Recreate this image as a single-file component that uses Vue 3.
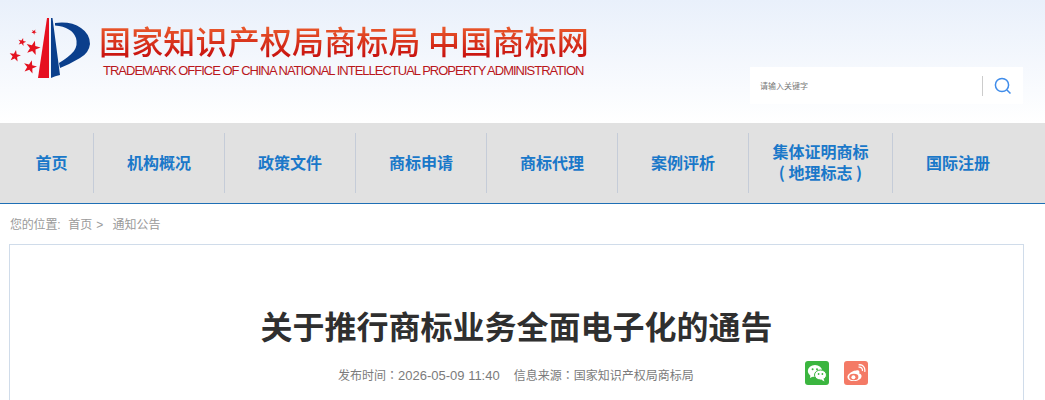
<template>
  <div class="page">
    <!-- 顶部 logo 和搜索 -->
    <header class="top">
      <div class="brand">
        <svg class="logo" width="92" height="70" viewBox="0 0 92 70">
          <path d="M29 61 L38 1 L40 1 L40 61 Z" fill="#e60f20" />
          <path d="M42 1 L43.5 1 L51 58 Q46 59 42 61 Z" fill="#0b3f8c" />
          <path d="M46 6 Q62 4 72 11 Q81 17 81 27 Q80 36 71 41 Q61 47 51 51 L50 46 Q60 40 65 34 Q69 28 67 21 Q63 10 46 8.5 Z" fill="#0b3f8c" />
          <polygon v-for="s in stars" :key="s" :points="s" fill="#e4111f" />
        </svg>
        <div class="brand-text">
          <div class="brand-cn">国家知识产权局商标局 中国商标网</div>
          <div class="brand-en">TRADEMARK OFFICE OF CHINA NATIONAL INTELLECTUAL PROPERTY ADMINISTRATION</div>
        </div>
      </div>
      <div class="search">
        <span class="search-tip">请输入关键字</span>
        <span class="search-line"></span>
        <svg width="18" height="18" viewBox="0 0 18 18" fill="none" stroke="#3f8cea" stroke-width="1.5">
          <circle cx="8" cy="8" r="6.6" />
          <line x1="13" y1="13" x2="16.5" y2="16.5" />
        </svg>
      </div>
    </header>

    <!-- 导航 -->
    <nav class="nav">
      <div
        v-for="item in navs"
        :key="item.name"
        class="nav-item"
        :class="item.cls"
      >
        <span>{{ item.name }}<template v-if="item.sub"><br />{{ item.sub }}</template></span>
      </div>
    </nav>

    <div class="crumb">
      <span class="crumb-label">您的位置:</span>
      <span>首页</span>
      <span class="gt">&gt;</span>
      <span>通知公告</span>
    </div>

    <!-- 正文 -->
    <section class="card">
      <h1 class="title">关于推行商标业务全面电子化的通告</h1>
      <div class="meta">
        <div class="meta-text">
          <span>发布时间：<span class="num">2026-05-09 11:40</span></span>
          <span>信息来源：国家知识产权局商标局</span>
        </div>
        <div class="share">
          <span class="share-btn wechat">
            <svg width="20" height="18" viewBox="0 0 20 18">
              <ellipse cx="8" cy="7" rx="7.2" ry="6" fill="#fff" />
              <path d="M3.5 10.5 L3 14 L7 12 Z" fill="#fff" />
              <ellipse cx="13.5" cy="11" rx="6" ry="5" fill="#fff" stroke="#3bb53f" stroke-width="1" />
              <path d="M16.5 14.5 L17.5 17.5 L14 15.5 Z" fill="#fff" />
              <circle cx="5.6" cy="5.2" r="1" fill="#3bb53f" />
              <circle cx="10" cy="5.2" r="1" fill="#3bb53f" />
              <circle cx="11.6" cy="10" r="0.9" fill="#3bb53f" />
              <circle cx="15.4" cy="10" r="0.9" fill="#3bb53f" />
            </svg>
          </span>
          <span class="share-btn weibo">
            <svg width="20" height="18" viewBox="0 0 20 18" fill="none">
              <path d="M8.5 6.5 C4.5 8 1 11 1.5 13.5 C2 16.5 6 17.5 9.5 17 C13.5 16.3 16 14 15.5 11.5 C15.2 10.3 14 9.8 13.2 9.6 C13.8 8 13.5 6.6 12 6.3 C11 6.1 9.5 6.5 8.5 7 C8.8 6.5 8.8 6.3 8.5 6.5 Z" fill="#fff" />
              <ellipse cx="7.8" cy="13" rx="4.6" ry="3.2" fill="#f47a66" />
              <circle cx="7.4" cy="13.2" r="2" fill="#fff" />
              <path d="M12.5 3.2 C15 2.6 17 4.5 16.4 7" stroke="#fff" stroke-width="1.3" />
              <path d="M12.6 0.9 C16.6 0 19.6 3.4 18.7 7.8" stroke="#fff" stroke-width="1.3" />
            </svg>
          </span>
        </div>
      </div>
    </section>
  </div>
</template>

<script setup>
const navs = [
  { name: '首页', cls: 'first' },
  { name: '机构概况' },
  { name: '政策文件' },
  { name: '商标申请' },
  { name: '商标代理' },
  { name: '案例评析' },
  { name: '集体证明商标', sub: '( 地理标志 )', cls: 'wide' },
  { name: '国际注册', cls: 'last' },
]

// 五角星的点，手工算的
const star = (cx, cy, r, rot) => {
  const pts = []
  for (let i = 0; i < 10; i++) {
    const rr = i % 2 ? r * 0.4 : r
    const a = ((rot + i * 36 - 90) * Math.PI) / 180
    pts.push((cx + rr * Math.cos(a)).toFixed(1) + ',' + (cy + rr * Math.sin(a)).toFixed(1))
  }
  return pts.join(' ')
}
const stars = [
  star(24, 31, 7.5, 15),
  star(13, 25, 4.2, 15),
  star(25, 15, 2.8, 30),
  star(6, 39, 6, 10),
  star(21, 50, 7, 15),
]
</script>

<style>
body {
  margin: 0;
  background: #fff;
}
</style>

<style scoped>
.page {
  width: 1045px;
  height: 400px;
  overflow: hidden;
  font-family: "Liberation Sans", "Noto Sans CJK SC", sans-serif;
}

.top {
  height: 123px;
  box-sizing: border-box;
  background: linear-gradient(#e9f0fb, #fff);
  display: flex;
  justify-content: space-between;
  padding: 10px 22px 0 9px;
}

.brand {
  display: flex;
  align-items: flex-start;
}

.logo {
  flex: none;
  margin-top: 7px;
}

.brand-text {
  margin-top: 7px;
}

.brand-cn {
  margin-left: -2px;
  font-family: "Noto Sans CJK SC", sans-serif;
  font-size: 32px;
  line-height: 46px;
  font-weight: 500;
  white-space: nowrap;
  letter-spacing: 0.17px;
  background: linear-gradient(#ea5a2c 20%, #c9120f 85%);
  -webkit-background-clip: text;
  background-clip: text;
  color: transparent;
}

.brand-en {
  margin-left: 2px;
  font-size: 13px;
  line-height: 16px;
  color: #b9171c;
  letter-spacing: -1px;
  white-space: nowrap;
}

.search {
  width: 273px;
  height: 37px;
  margin-top: 57px;
  background: #fff;
  display: flex;
  align-items: center;
  box-sizing: border-box;
  padding: 0 11px 0 10px;
}

.search-tip {
  flex: 1;
  font-size: 8px;
  color: #777;
}

.search-line {
  width: 1px;
  height: 20px;
  background: #ccc;
  margin-right: 11px;
}

.nav {
  height: 80px;
  background: #e1e1e1;
  border-bottom: 1px solid #1e6fb5;
  display: flex;
  align-items: center;
  padding-left: 10px;
}

.nav-item {
  width: 130px;
  height: 60px;
  border-right: 1px solid #c5ccd8;
  display: flex;
  align-items: center;
  justify-content: center;
  text-align: center;
  font-size: 16px;
  line-height: 21px;
  font-weight: 700;
  color: #1a78c9;
  font-family: "Noto Sans CJK SC", "Liberation Sans", sans-serif;
}

.nav-item span {
  margin-top: -2px;
}

.nav-item.first {
  width: 83px;
}

.nav-item.wide {
  width: 143px;
}

.nav-item.last {
  border-right: none;
}

.crumb {
  height: 40px;
  box-sizing: border-box;
  padding: 13px 0 0 10px;
  font-size: 12px;
  line-height: 17px;
  color: #9a9a9a;
  display: flex;
}

.crumb-label {
  margin-right: 8px;
  letter-spacing: -0.2px;
}

.gt {
  margin: 0 9px 0 4px;
}

.card {
  margin-left: 9px;
  width: 1015px;
  height: 200px;
  box-sizing: border-box;
  border: 1px solid #d0dcea;
  background: #fff;
}

.title {
  margin: 57px 0 0;
  text-align: center;
  font-family: "Noto Sans CJK SC", sans-serif;
  font-size: 32px;
  line-height: 46px;
  font-weight: 700;
  color: #2f2f2f;
}

.meta {
  margin-top: 12px;
  display: flex;
  align-items: center;
  height: 26px;
}

.meta-text {
  margin-left: 328px;
  width: 467px;
  padding-top: 2px;
  display: flex;
  gap: 14px;
  font-family: "Liberation Sans", "Noto Sans CJK TC", sans-serif;
  font-size: 12px;
  color: #7b7b7b;
}

.num {
  font-size: 13px;
}

.share {
  display: flex;
  gap: 15px;
}

.share-btn {
  width: 24px;
  height: 24px;
  border-radius: 3px;
  display: flex;
  align-items: center;
  justify-content: center;
}

.wechat {
  background: #3bb53f;
}

.weibo {
  background: #f47a66;
}
</style>
